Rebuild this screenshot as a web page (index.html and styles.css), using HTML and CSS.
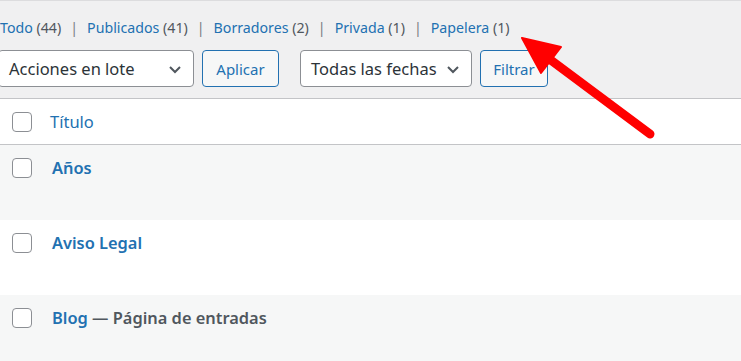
FILE: index.html
```html
<!DOCTYPE html>
<html lang="es">
<head>
    <meta charset="UTF-8">
    <meta name="viewport" content="width=device-width, initial-scale=1.0">
    <title>Páginas</title>
    <link rel="stylesheet" href="styles.css">
</head>
<body>
    <div class="wrap">
        <ul class="subsubsub">
            <li><a href="#">Todo <span class="count">(44)</span></a><span class="sep">|</span></li>
            <li><a href="#">Publicados <span class="count">(41)</span></a><span class="sep">|</span></li>
            <li><a href="#">Borradores <span class="count">(2)</span></a><span class="sep">|</span></li>
            <li><a href="#">Privada <span class="count">(1)</span></a><span class="sep">|</span></li>
            <li><a href="#">Papelera <span class="count">(1)</span></a></li>
        </ul>

        <div class="tablenav">
            <div class="select select-bulk">
                <span>Acciones en lote</span>
                <svg class="chevron" width="20" height="20" viewBox="0 0 20 20"><path d="M5 8l5 5 5-5" fill="none" stroke="#50575e" stroke-width="2"/></svg>
            </div>
            <button class="button btn-apply">Aplicar</button>
            <div class="select select-dates">
                <span>Todas las fechas</span>
                <svg class="chevron" width="20" height="20" viewBox="0 0 20 20"><path d="M5 8l5 5 5-5" fill="none" stroke="#50575e" stroke-width="2"/></svg>
            </div>
            <button class="button btn-filter">Filtrar</button>
        </div>

        <div class="list-table">
            <div class="row row-head">
                <span class="check"></span>
                <a class="col-title" href="#">Título</a>
            </div>
            <div class="row row-alt">
                <span class="check"></span>
                <a class="row-title" href="#">Años</a>
            </div>
            <div class="row">
                <span class="check"></span>
                <a class="row-title" href="#">Aviso Legal</a>
            </div>
            <div class="row row-alt">
                <span class="check"></span>
                <span class="row-title"><a href="#">Blog</a> <span class="post-state">— Página de entradas</span></span>
            </div>
        </div>

        <!-- annotation arrow -->
        <svg class="arrow" width="741" height="361" viewBox="0 0 741 361">
            <line x1="548" y1="58" x2="650" y2="134" stroke="#ff0000" stroke-width="9" stroke-linecap="round"/>
            <polygon points="522,38 561,47 541,73" fill="#ff0000" stroke="#ff0000" stroke-width="2" stroke-linejoin="round"/>
        </svg>
    </div>
</body>
</html>
```

FILE: styles.css
```css
body {
    margin: 0;
    background-color: #f0f0f1;
    font-family: "Noto Sans", "Open Sans", sans-serif;
    color: #3c434a;
    overflow: hidden;
}

a {
    color: #2271b1;
    text-decoration: none;
}

.wrap {
    position: relative;
    border-top: 1px solid #dcdcde;
    height: 360px;
}

.subsubsub {
    list-style: none;
    margin: 0;
    padding: 16px 0 0 0;
    display: flex;
    font-size: 14.2px;
    line-height: 22px;
}

.subsubsub .count {
    color: #50575e;
}

.subsubsub .sep {
    color: #787c82;
    margin: 0 9px;
}

.tablenav {
    display: flex;
    align-items: center;
    margin: 11px 0 11px -2px;
    height: 37px;
}

.select {
    box-sizing: border-box;
    height: 37px;
    display: flex;
    align-items: center;
    justify-content: space-between;
    padding: 0 8px 0 10px;
    background-color: #ffffff;
    border: 1px solid #8c8f94;
    border-radius: 4px;
    font-size: 16.5px;
    color: #2c3338;
}

.select-bulk {
    width: 196px;
}

.select-dates {
    width: 172px;
    margin-left: 21px;
}

.button {
    box-sizing: border-box;
    height: 37px;
    margin-left: 8px;
    padding: 0;
    background-color: #f6f7f7;
    border: 1px solid #2271b1;
    border-radius: 4px;
    color: #2271b1;
    font-family: inherit;
    font-size: 15px;
}

.btn-apply {
    width: 77px;
}

.btn-filter {
    width: 68px;
}

.list-table {
    border-top: 1px solid #c3c4c7;
    background-color: #ffffff;
}

.row {
    display: flex;
    align-items: flex-start;
    height: 75px;
    padding: 13px 0 0 12px;
    box-sizing: border-box;
}

.row-head {
    height: 46px;
    border-bottom: 1px solid #c3c4c7;
}

.row-alt {
    background-color: #f6f7f7;
}

.check {
    box-sizing: border-box;
    width: 20px;
    height: 20px;
    background-color: #ffffff;
    border: 1px solid #8c8f94;
    border-radius: 4px;
    flex-shrink: 0;
}

.col-title {
    margin-left: 18px;
    font-size: 16.5px;
    line-height: 20px;
}

.row-title {
    margin-left: 20px;
    font-size: 16.4px;
    line-height: 20px;
    font-weight: 600;
    color: #2271b1;
}

.post-state {
    color: #50575e;
}

.arrow {
    position: absolute;
    top: -1px;
    left: 0;
    pointer-events: none;
}
```
